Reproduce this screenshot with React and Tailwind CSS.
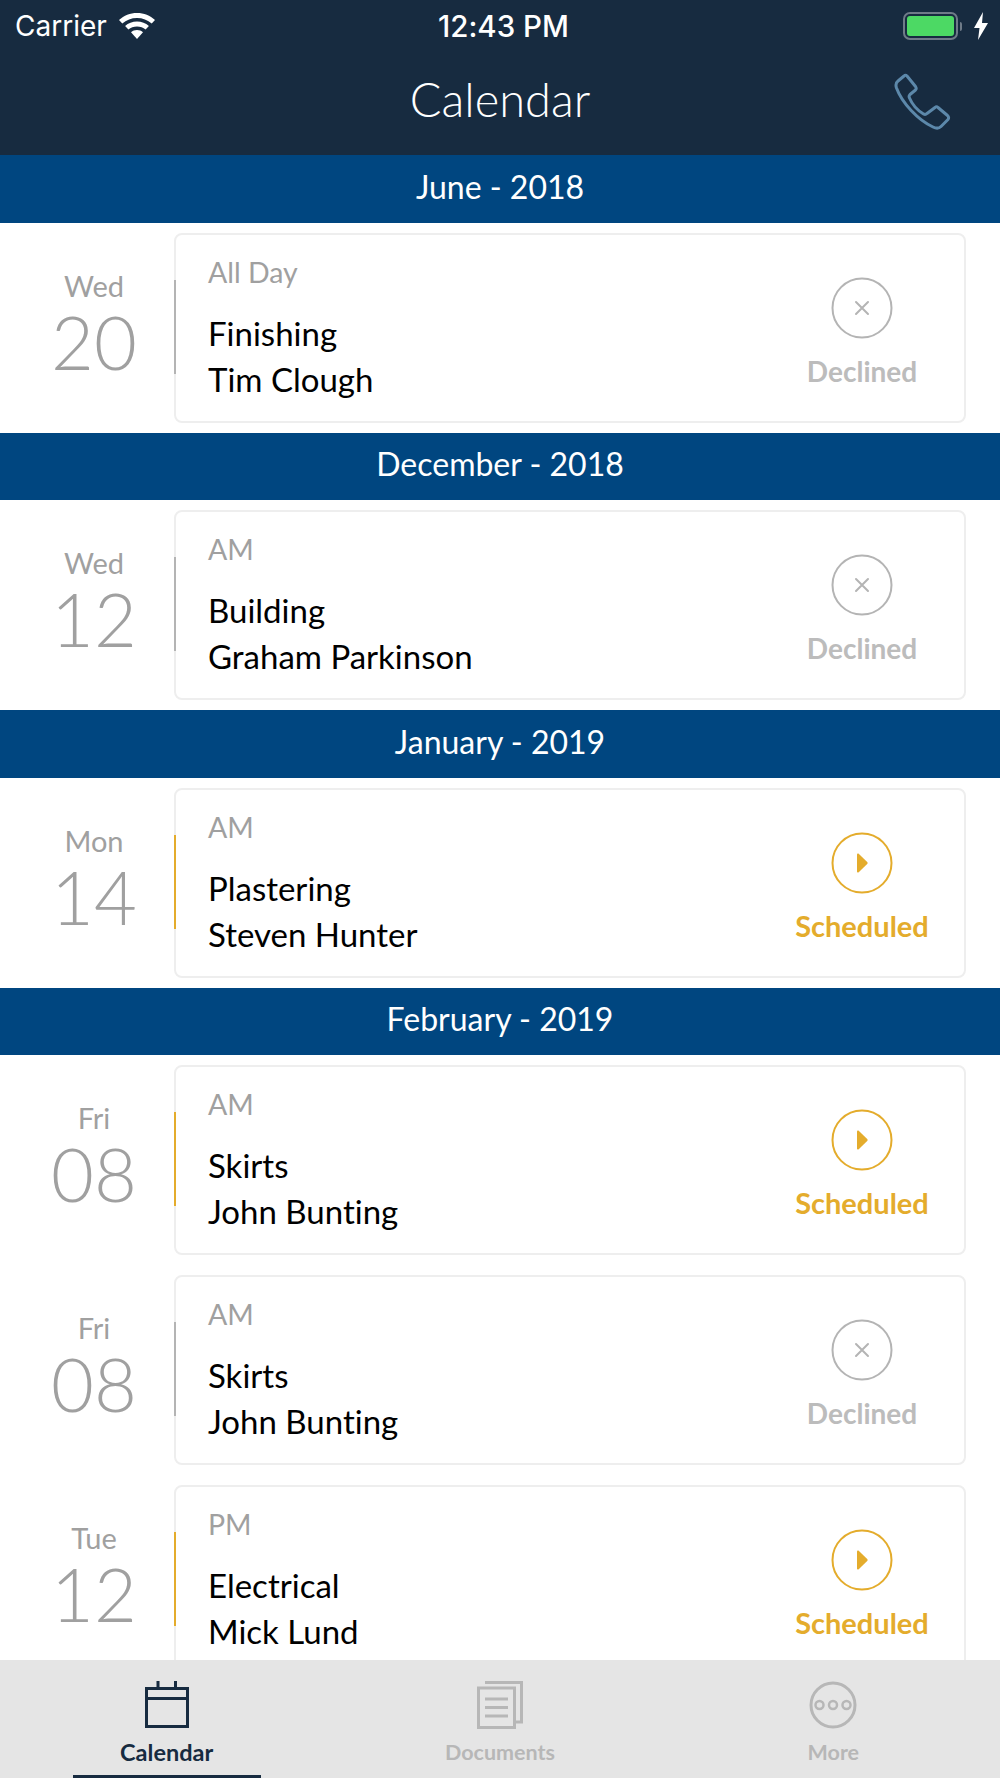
const SECTIONS = [
  {
    month: "June - 2018",
    rows: [{ dow: "Wed", day: "20", time: "All Day", trade: "Finishing", name: "Tim Clough", status: "declined" }],
  },
  {
    month: "December - 2018",
    rows: [{ dow: "Wed", day: "12", time: "AM", trade: "Building", name: "Graham Parkinson", status: "declined" }],
  },
  {
    month: "January - 2019",
    rows: [{ dow: "Mon", day: "14", time: "AM", trade: "Plastering", name: "Steven Hunter", status: "scheduled" }],
  },
  {
    month: "February - 2019",
    rows: [
      { dow: "Fri", day: "08", time: "AM", trade: "Skirts", name: "John Bunting", status: "scheduled" },
      { dow: "Fri", day: "08", time: "AM", trade: "Skirts", name: "John Bunting", status: "declined" },
      { dow: "Tue", day: "12", time: "PM", trade: "Electrical", name: "Mick Lund", status: "scheduled" },
    ],
  },
];

function WifiIcon() {
  return (
    <svg width="36" height="26" viewBox="0 0 36 26" fill="#fff">
      <path d="M18 0C11 0 5 2.600 0 7l3.300 3.600C7.300 7 12.400 5 18 5s10.700 2 14.700 5.600L36 7C31 2.600 25 0 18 0z" />
      <path d="M18 8.500c-4.600 0-8.700 1.700-11.900 4.500l3.300 3.600c2.300-2 5.300-3.200 8.600-3.200s6.300 1.200 8.600 3.200l3.300-3.600C26.700 10.200 22.600 8.500 18 8.500z" />
      <path d="M18 17c-2.300 0-4.400.9-6 2.300L18 26l6-6.700C22.400 17.900 20.300 17 18 17z" />
    </svg>
  );
}

function PhoneIcon() {
  return (
    <svg className="absolute right-[47px] top-[21px]" width="60" height="58" viewBox="0 0 60 58" fill="none" stroke="#5c88aa" strokeWidth="3" strokeLinejoin="round">
      <path d="M11 3C12 2 13 2 14 3L22.500 13.500C23.500 15 23.500 16 22.500 17L17 21.500C16 22.500 16 24 16.500 25C19 31 24 37 30.500 41C31.500 41.500 33 41.500 34 40.500L42 34.500C43 33.500 44 33.500 45 34.500L54.500 42.500C56 44 56 45 55 46.500L48 53.500C46 55.500 43 55.500 40 54C25 47 9 30 3.500 15C2.500 12 3 9.500 5 8Z" />
    </svg>
  );
}

function Battery() {
  return (
    <div className="flex items-center gap-[2px]">
      <div className="w-[55px] h-[28px] rounded-[7px] border-2 border-[#6f7b88] p-[2px]">
        <div className="w-full h-full rounded-[3px] bg-[#4cd964]" />
      </div>
      <div className="w-[2px] h-[9px] rounded-r bg-[#6f7b88]" />
    </div>
  );
}

function Bolt() {
  return (
    <svg width="14" height="28" viewBox="0 0 14 28" fill="#fff">
      <path d="M9 0L0 16h5.500L4 28l10-17H8z" />
    </svg>
  );
}

function StatusBlock({ status }) {
  const declined = status === "declined";
  return (
    <div className="w-[140px] flex flex-col items-center pt-[42px]">
      {declined ? (
        <svg width="62" height="62" viewBox="0 0 62 62" fill="none" stroke="#b4b4b4" strokeWidth="2">
          <circle cx="31" cy="31" r="29.500" />
          <path d="M25 25l12 12M37 25L25 37" strokeLinecap="round" />
        </svg>
      ) : (
        <svg width="62" height="62" viewBox="0 0 62 62" fill="none">
          <circle cx="31" cy="31" r="29.500" stroke="#e4ac2c" strokeWidth="2" />
          <path d="M26 22.500c0-1 1-1.400 1.700-.8l8.500 8.300c.6.600.6 1.400 0 2l-8.500 8.300c-.7.600-1.700.2-1.700-.8z" fill="#e4ac2c" />
        </svg>
      )}
      <div className={`mt-[16px] leading-[32px] font-bold whitespace-nowrap ${declined ? "text-[#bcbcbc] text-[28px]" : "text-[#e4ac2c] text-[29px]"}`}>
        {declined ? "Declined" : "Scheduled"}
      </div>
    </div>
  );
}

function Row({ row }) {
  const declined = row.status === "declined";
  return (
    <div className="h-[210px] flex bg-white pt-[10px] pb-[10px] pr-[34px]">
      <div className="w-[174px] shrink-0 flex flex-col items-center pt-[35px] pl-[14px] text-[#a0a0a0]">
        <div className="text-[29px] leading-[36px]">{row.dow}</div>
        <div className="mt-[8px] text-[74px] leading-[60px] font-light">{row.day}</div>
      </div>
      <div className="relative flex-1 flex justify-between rounded-[8px] border-2 border-[#eeeeee] pl-[32px] pr-[32px]">
        <div className={`absolute left-[-2px] top-[45px] h-[94px] w-[2px] ${declined ? "bg-[#b4b4b4]" : "bg-[#e4ac2c]"}`} />
        <div className="pt-[20px]">
          <div className="text-[28.500px] leading-[34px] text-[#a0a0a0]">{row.time}</div>
          <div className="mt-[21px] text-[33px] leading-[46px] text-black">{row.trade}</div>
          <div className="text-[33px] leading-[46px] text-black">{row.name}</div>
        </div>
        <StatusBlock status={row.status} />
      </div>
    </div>
  );
}

function CalendarIcon() {
  return (
    <svg width="44" height="48" viewBox="0 0 44 48" fill="none" stroke="#172b40" strokeWidth="3">
      <rect x="1.500" y="7.500" width="41" height="38" />
      <path d="M1.500 17.500h41M13 0v7M30.500 0v7" />
    </svg>
  );
}

function DocumentsIcon() {
  return (
    <svg width="46" height="48" viewBox="0 0 46 48" fill="none" stroke="#b7b7b7" strokeWidth="3">
      <path d="M8 1.500h36.500V41h-7" />
      <rect x="1.500" y="7" width="36" height="39.500" />
      <path d="M8 18h23M8 26.500h23M8 35h23" />
    </svg>
  );
}

function MoreIcon() {
  return (
    <svg width="48" height="48" viewBox="0 0 48 48" fill="none" stroke="#b7b7b7">
      <circle cx="24" cy="24" r="22" strokeWidth="3" />
      <circle cx="10.500" cy="24" r="4" strokeWidth="2.500" />
      <circle cx="24" cy="24" r="4" strokeWidth="2.500" />
      <circle cx="37.500" cy="24" r="4" strokeWidth="2.500" />
    </svg>
  );
}

function Tab({ icon, label, active }) {
  return (
    <div className="relative flex-1 flex flex-col items-center pt-[21px]">
      {icon}
      <div className={`mt-[9px] leading-[28px] font-bold ${active ? "text-[23.500px] text-[#172b40]" : "text-[21.500px] text-[#b7b7b7]"}`}>
        {label}
      </div>
      {active && <div className="absolute bottom-0 left-[73px] w-[188px] h-[3px] bg-[#172b40]" />}
    </div>
  );
}

export default function App() {
  return (
    <div className="h-[1778px] w-[1000px] flex flex-col overflow-hidden bg-white [font-variant-ligatures:none] font-['Lato','Liberation_Sans',sans-serif]">
      {/* Header */}
      <div className="h-[155px] shrink-0 bg-[#172b40] text-white">
        <div className="h-[52px] relative flex items-center justify-between pl-[15px] pr-[12px] font-['Inter','Liberation_Sans',sans-serif]">
          <div className="flex items-center gap-[12px]">
            <span className="text-[28px]">Carrier</span>
            <WifiIcon />
          </div>
          <div className="absolute left-[438px] text-[29.500px] font-medium">12:43 PM</div>
          <div className="flex items-center gap-[12px]">
            <Battery />
            <Bolt />
          </div>
        </div>
        <div className="h-[103px] relative flex items-center justify-center pb-[9px]">
          <div className="text-[47px] font-light">Calendar</div>
          <PhoneIcon />
        </div>
      </div>

      {/* List */}
      <div className="flex-1 overflow-hidden">
        {SECTIONS.map((s) => (
          <div key={s.month}>
            <div className="h-[67.500px] pb-[4px] flex items-center justify-center bg-[#004680] text-white text-[32px]">{s.month}</div>
            {s.rows.map((r, i) => (
              <Row key={i} row={r} />
            ))}
          </div>
        ))}
      </div>

      {/* Tab bar */}
      <div className="h-[118px] shrink-0 flex bg-[#e5e5e5]">
        <Tab icon={<CalendarIcon />} label="Calendar" active />
        <Tab icon={<DocumentsIcon />} label="Documents" />
        <Tab icon={<MoreIcon />} label="More" />
      </div>
    </div>
  );
}
